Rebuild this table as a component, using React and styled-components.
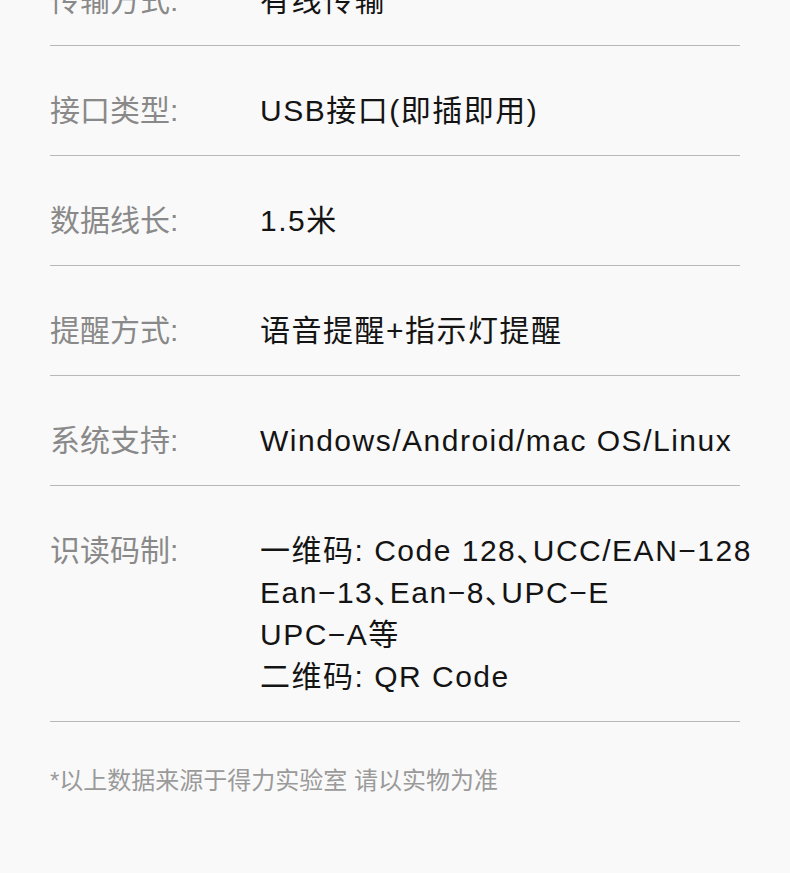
import React from 'react';
import styled, { createGlobalStyle } from 'styled-components';

const GlobalStyle = createGlobalStyle`
  html, body {
    margin: 0;
    padding: 0;
    background: #f9f9f9;
  }
  body {
    font-family: "Liberation Sans", "Noto Sans CJK SC", sans-serif;
    overflow: hidden;
  }
`;

const SpecContainer = styled.div`
  width: 790px;
  height: 873px;
  background: #f9f9f9;
  padding: 0 50px;
  box-sizing: border-box;
  overflow: hidden;
`;

const SpecList = styled.div`
  margin-top: -64px;
`;

const SpecRow = styled.div`
  display: grid;
  grid-template-columns: 210px 1fr;
  padding: 44px 0 23px;
  border-bottom: 1px solid #b8b8b8;
  font-size: 30px;
  line-height: 42px;
`;

const SpecLabel = styled.div`
  color: #898989;
  white-space: nowrap;
`;

const SpecValue = styled.div`
  color: #141414;
  letter-spacing: 1.5px;
  white-space: nowrap;
  font-feature-settings: "halt";
`;

const Note = styled.p`
  margin: 41px 0 0;
  font-size: 24px;
  line-height: 36px;
  color: #9a9a9a;
  white-space: nowrap;
`;

const specs = [
  { label: '传输方式:', value: ['有线传输'] },
  { label: '接口类型:', value: ['USB接口(即插即用)'] },
  { label: '数据线长:', value: ['1.5米'] },
  { label: '提醒方式:', value: ['语音提醒+指示灯提醒'] },
  { label: '系统支持:', value: ['Windows/Android/mac OS/Linux'] },
  {
    label: '识读码制:',
    value: [
      '一维码: Code 128、UCC/EAN−128',
      'Ean−13、Ean−8、UPC−E',
      'UPC−A等',
      '二维码: QR Code',
    ],
  },
];

const App = () => {
  return (
    <SpecContainer>
      <GlobalStyle />
      <SpecList>
        {specs.map((spec, index) => (
          <SpecRow key={index}>
            <SpecLabel>{spec.label}</SpecLabel>
            <SpecValue>
              {spec.value.map((line, i) => (
                <div key={i}>{line}</div>
              ))}
            </SpecValue>
          </SpecRow>
        ))}
      </SpecList>
      <Note>*以上数据来源于得力实验室 请以实物为准</Note>
    </SpecContainer>
  );
};

export default App;
